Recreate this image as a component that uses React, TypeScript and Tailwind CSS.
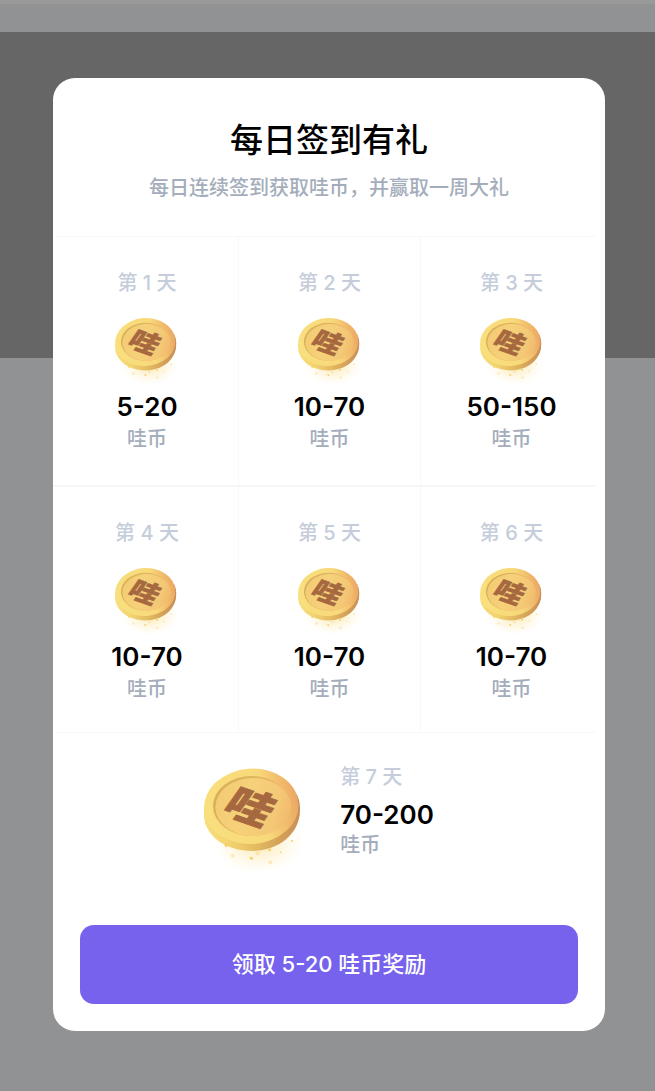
import { useId } from "react";

type Reward = { day: number; amount: string };

const firstRow: Reward[] = [
  { day: 1, amount: "5-20" },
  { day: 2, amount: "10-70" },
  { day: 3, amount: "50-150" },
];

const secondRow: Reward[] = [
  { day: 4, amount: "10-70" },
  { day: 5, amount: "10-70" },
  { day: 6, amount: "10-70" },
];

function Coin({ className }: { className: string }) {
  const id = useId();
  return (
    <svg viewBox="5 0 300 330" className={className} aria-hidden="true">
      <defs>
        <linearGradient id={`${id}side`} x1="0" y1="0" x2="1" y2="0">
          <stop offset="0" stopColor="#f8de7c" />
          <stop offset="0.25" stopColor="#f3d571" />
          <stop offset="0.5" stopColor="#e6bf64" />
          <stop offset="0.8" stopColor="#d3a058" />
          <stop offset="1" stopColor="#c98f58" />
        </linearGradient>
        <linearGradient id={`${id}face`} x1="0" y1="0.48" x2="1" y2="0.4">
          <stop offset="0" stopColor="#f9df7e" />
          <stop offset="0.62" stopColor="#f8d97a" />
          <stop offset="0.85" stopColor="#f1b96b" />
          <stop offset="1" stopColor="#eba762" />
        </linearGradient>
        <linearGradient id={`${id}edge`} x1="0" y1="0" x2="1" y2="0.3">
          <stop offset="0" stopColor="#d6ad56" />
          <stop offset="0.5" stopColor="#e0b65e" />
          <stop offset="0.8" stopColor="#f0b969" />
          <stop offset="1" stopColor="#f3bd6d" />
        </linearGradient>
        <linearGradient id={`${id}well`} x1="0" y1="0.4" x2="1" y2="0.6">
          <stop offset="0" stopColor="#f3cb75" />
          <stop offset="0.4" stopColor="#f6d17a" />
          <stop offset="0.8" stopColor="#f4c875" />
          <stop offset="1" stopColor="#f1bb6d" />
        </linearGradient>
        <radialGradient id={`${id}glow`}>
          <stop offset="0" stopColor="#fbe3a0" stopOpacity="0.8" />
          <stop offset="0.5" stopColor="#fdebb8" stopOpacity="0.45" />
          <stop offset="1" stopColor="#fff6dc" stopOpacity="0" />
        </radialGradient>
      </defs>
      <ellipse cx="168" cy="230" rx="140" ry="92" fill={`url(#${id}glow)`} />
      <path
        d="M5 125 C4 145 5 163 12 178 C35 228 92 252 150 252 C224 252 286 206 292 142 L292 118 Z"
        fill={`url(#${id}side)`}
      />
      <ellipse
        cx="147"
        cy="118"
        rx="142"
        ry="113"
        transform="rotate(-4 147 118)"
        fill={`url(#${id}face)`}
      />
      <path d="M281 78 C296 102 296 137 285 164 C290 135 290 106 281 78Z" fill="#c98f58" />
      <ellipse cx="149" cy="117" rx="117" ry="90" fill={`url(#${id}edge)`} />
      <ellipse cx="152" cy="120" rx="113" ry="87" fill={`url(#${id}well)`} />
      <g transform="matrix(0.95 0.33 -0.52 0.74 145 119)">
        <text
          x="0"
          y="52"
          textAnchor="middle"
          fontSize="138"
          fontWeight="900"
          fill="#a5683f"
          stroke="#a5683f"
          strokeWidth="2"
          className="font-['Noto_Sans_CJK_SC',sans-serif]"
        >
          哇
        </text>
      </g>
      <g fill="#f6d05e">
        <path d="M66 231l10 0-1 8-6 2z" />
        <path d="M197 244l9 1-1 8-6 0z" />
        <path d="M142 269l9 2 0 7-6 0z" />
        <circle cx="269" cy="222" r="3" />
        <circle cx="235" cy="256" r="2.5" />
      </g>
      <g fill="#f7cf62" opacity="0.35">
        <circle cx="91" cy="266" r="6" />
        <circle cx="166" cy="259" r="6" />
        <circle cx="204" cy="286" r="6" />
      </g>
    </svg>
  );
}

function DayCell({ day, amount }: Reward) {
  return (
    <li className="flex flex-col items-center border-l border-[#f7f8fa] pt-8 first:border-l-0">
      <p className="text-xl leading-7 font-medium text-[#c5cddb]">第 {day} 天</p>
      <Coin className="mt-5 h-[70px] w-16" />
      <p className="mt-1 text-[26px] leading-8 font-semibold text-black">{amount}</p>
      <p className="mt-0.5 text-xl leading-7 font-medium text-[#a4adbb]">哇币</p>
    </li>
  );
}

export default function App() {
  return (
    <div className="relative min-h-screen bg-[#f2f3f5] font-['Inter','Noto_Sans_CJK_SC',sans-serif]">
      <div className="absolute inset-0 flex flex-col" aria-hidden="true">
        <div className="h-1 bg-white" />
        <div className="mt-7 h-[326px] bg-[#aaaaaa]" />
      </div>
      <div className="absolute inset-0 bg-black/40" aria-hidden="true" />

      <main className="relative pt-[78px] pr-[50px] pb-[60px] pl-[53px]">
        <section
          role="dialog"
          aria-labelledby="checkin-title"
          className="rounded-[22px] bg-white pt-10 pb-[27px]"
        >
          <header className="pb-[34px] text-center">
            <h1 id="checkin-title" className="text-[33px] leading-11 font-medium text-black">
              每日签到有礼
            </h1>
            <p className="mt-3 text-xl leading-7 font-medium text-[#a4adbb]">
              每日连续签到获取哇币，并赢取一周大礼
            </p>
          </header>

          <hr className="mr-[9px] ml-1 border-t border-[#f8f8fa]" />
          <ul className="mx-[3px] grid grid-cols-3 *:pb-8">
            {firstRow.map((reward) => (
              <DayCell key={reward.day} {...reward} />
            ))}
          </ul>
          <hr className="mr-[9px] border-t-2 border-[#f6f6f8]" />
          <ul className="mx-[3px] grid grid-cols-3 *:pb-[29px]">
            {secondRow.map((reward) => (
              <DayCell key={reward.day} {...reward} />
            ))}
          </ul>
          <hr className="mr-[9px] ml-1 border-t border-[#f7f8fa]" />

          <div className="flex justify-center gap-9 pt-[34px] pr-5">
            <Coin className="h-[110px] w-[100px]" />
            <div className="-mt-1">
              <p className="text-xl leading-7 font-medium text-[#c5cddb]">第 7 天</p>
              <p className="mt-2 text-[26px] leading-8 font-semibold text-black">70-200</p>
              <p className="text-xl leading-7 font-medium text-[#a4adbb]">哇币</p>
            </div>
          </div>

          <div className="mt-12 px-[27px]">
            <button
              type="button"
              className="h-[79px] w-full rounded-[14px] bg-[#7662ec] text-[22px] font-medium text-white"
            >
              领取 5-20 哇币奖励
            </button>
          </div>
        </section>
      </main>
    </div>
  );
}
